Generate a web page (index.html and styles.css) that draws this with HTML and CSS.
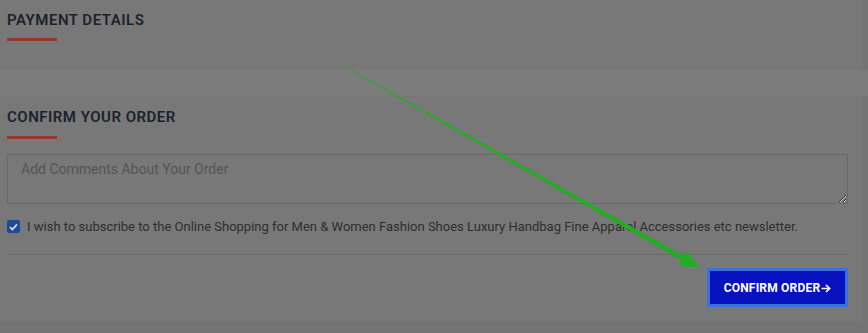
FILE: index.html
```html
<!DOCTYPE html>
<html lang="en">
<head>
    <meta charset="UTF-8">
    <meta name="viewport" content="width=device-width, initial-scale=1.0">
    <title>Checkout</title>
    <link rel="stylesheet" href="styles.css">
</head>
<body>
    <div class="card payment">
        <h3 class="title">Payment Details</h3>
    </div>
    <div class="spacer"></div>
    <div class="card confirm">
        <h3 class="title">Confirm Your Order</h3>
        <textarea class="comments" placeholder="Add Comments About Your Order"></textarea>
        <label class="subscribe">
            <span class="check">
                <svg width="9" height="8" viewBox="0 0 9 8"><path d="M1 4.2 L3.4 6.5 L8 1.3" fill="none" stroke="#d8d8d8" stroke-width="1.8"/></svg>
            </span>
            I wish to subscribe to the Online Shopping for Men &amp; Women Fashion Shoes Luxury Handbag Fine Apparel Accessories etc newsletter.
        </label>
        <div class="actions">
            <button class="confirm-btn">CONFIRM ORDER<svg class="arrow" width="10" height="9" viewBox="0 0 10 9"><path d="M0.5 4.5 H8.3 M5 1 L8.6 4.5 L5 8" fill="none" stroke="#ffffff" stroke-width="1.7"/></svg></button>
        </div>
    </div>

    <svg class="pointer" width="868" height="333" viewBox="0 0 868 333">
        <polygon points="343,65 683.8,255.9 686.6,251.1 700,268 678.6,265.1 681.4,260.3 342.6,65.6" fill="#22ae22"/>
    </svg>
</body>
</html>
```

FILE: styles.css
```css
body {
    margin: 0;
    background: #747474;
    font-family: Roboto, "Liberation Sans", sans-serif;
    width: 868px;
    height: 333px;
    overflow: hidden;
    position: relative;
}
.card {
    width: 863px;
    background: #787878;
    box-sizing: border-box;
    padding: 0 7px;
}
.payment {
    height: 70px;
    padding-top: 11px;
}
.spacer {
    height: 26px;
    background: #7c7c7c;
}
.confirm {
    height: 225px;
    padding-top: 12px;
}
.title {
    margin: 0;
    font-size: 15px;
    font-weight: 600;
    letter-spacing: 0.5px;
    text-transform: uppercase;
    color: #1b222e;
    line-height: 19px;
    padding-bottom: 10px;
}
.payment .title::after {
    margin-top: 8px;
}
.title::after {
    content: "";
    display: block;
    width: 50px;
    height: 3px;
    background: #95392a;
    margin-top: 9px;
}
.comments {
    display: block;
    width: 841px;
    height: 50px;
    box-sizing: border-box;
    margin: 5px 0 0;
    padding: 6px 13px;
    border: 1px solid #6a6a6a;
    background: #787878;
    font-family: inherit;
    font-size: 14px;
    color: #3a3a3a;
    resize: vertical;
}
.comments::placeholder {
    color: #555555;
}
.subscribe {
    display: flex;
    align-items: center;
    gap: 7px;
    margin-top: 15px;
    font-size: 13px;
    color: #2e2e2e;
    padding-bottom: 20px;
    border-bottom: 1px solid #6c6c6c;
    width: 841px;
}
.check {
    width: 13px;
    height: 13px;
    border-radius: 2px;
    background: #1d4a9a;
    display: flex;
    align-items: center;
    justify-content: center;
    flex-shrink: 0;
}
.actions {
    width: 841px;
    display: flex;
    justify-content: flex-end;
    margin-top: 13px;
}
.confirm-btn {
    width: 141px;
    height: 39px;
    background: #0912c0;
    border: 3px solid #3a6fdc;
    color: #ffffff;
    font-family: inherit;
    font-size: 12px;
    font-weight: 700;
    letter-spacing: 0.2px;
    padding: 0;
    display: flex;
    align-items: center;
    justify-content: center;
    gap: 1px;
    cursor: pointer;
}
.arrow {
    margin-top: 1px;
}
.pointer {
    position: absolute;
    left: 0;
    top: 0;
    pointer-events: none;
}
```
